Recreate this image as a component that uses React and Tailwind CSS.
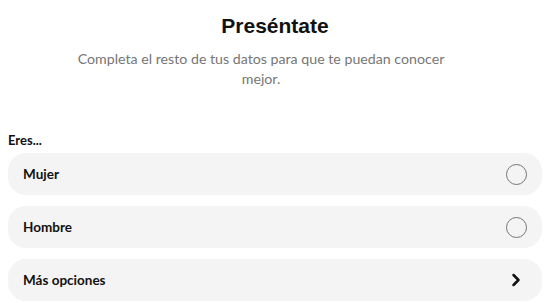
import { ChevronRight } from "lucide-react";

const options = [
  { label: "Mujer", type: "radio" },
  { label: "Hombre", type: "radio" },
  { label: "Más opciones", type: "more" },
];

function App() {
  return (
    <div
      className="min-h-screen bg-white px-2 pt-[11px]"
      style={{ fontFamily: 'Lato, "Open Sans", sans-serif' }}
    >
      <h1
        className="text-center text-[21px] font-bold leading-[30px] text-[#111111]"
        style={{ fontFamily: '"Liberation Sans", Arial, sans-serif' }}
      >
        Preséntate
      </h1>

      <p className="mx-auto mt-[8px] w-[400px] -translate-x-[14px] text-center text-[14.2px] leading-[20px] text-[#767676]">
        Completa el resto de tus datos para que te puedan conocer mejor.
      </p>

      <p className="mt-[42px] text-[13px] font-bold leading-[18px] text-[#111111]">
        Eres...
      </p>

      <div className="mt-[4px] flex flex-col gap-[11px]">
        {options.map((o) => (
          <div
            key={o.label}
            className="flex h-[42px] items-center justify-between rounded-[18px] bg-[#f4f4f4] pl-[15px] pr-[15px]"
          >
            <span className="text-[13.5px] font-bold text-[#111111]">
              {o.label}
            </span>

            {o.type === "radio" ? (
              <span className="h-[21px] w-[21px] rounded-full border-[1.5px] border-[#757575]" />
            ) : (
              <ChevronRight
                size={20}
                strokeWidth={3}
                className="mr-[1px] text-[#111111]"
              />
            )}
          </div>
        ))}
      </div>
    </div>
  );
}

export default App;
